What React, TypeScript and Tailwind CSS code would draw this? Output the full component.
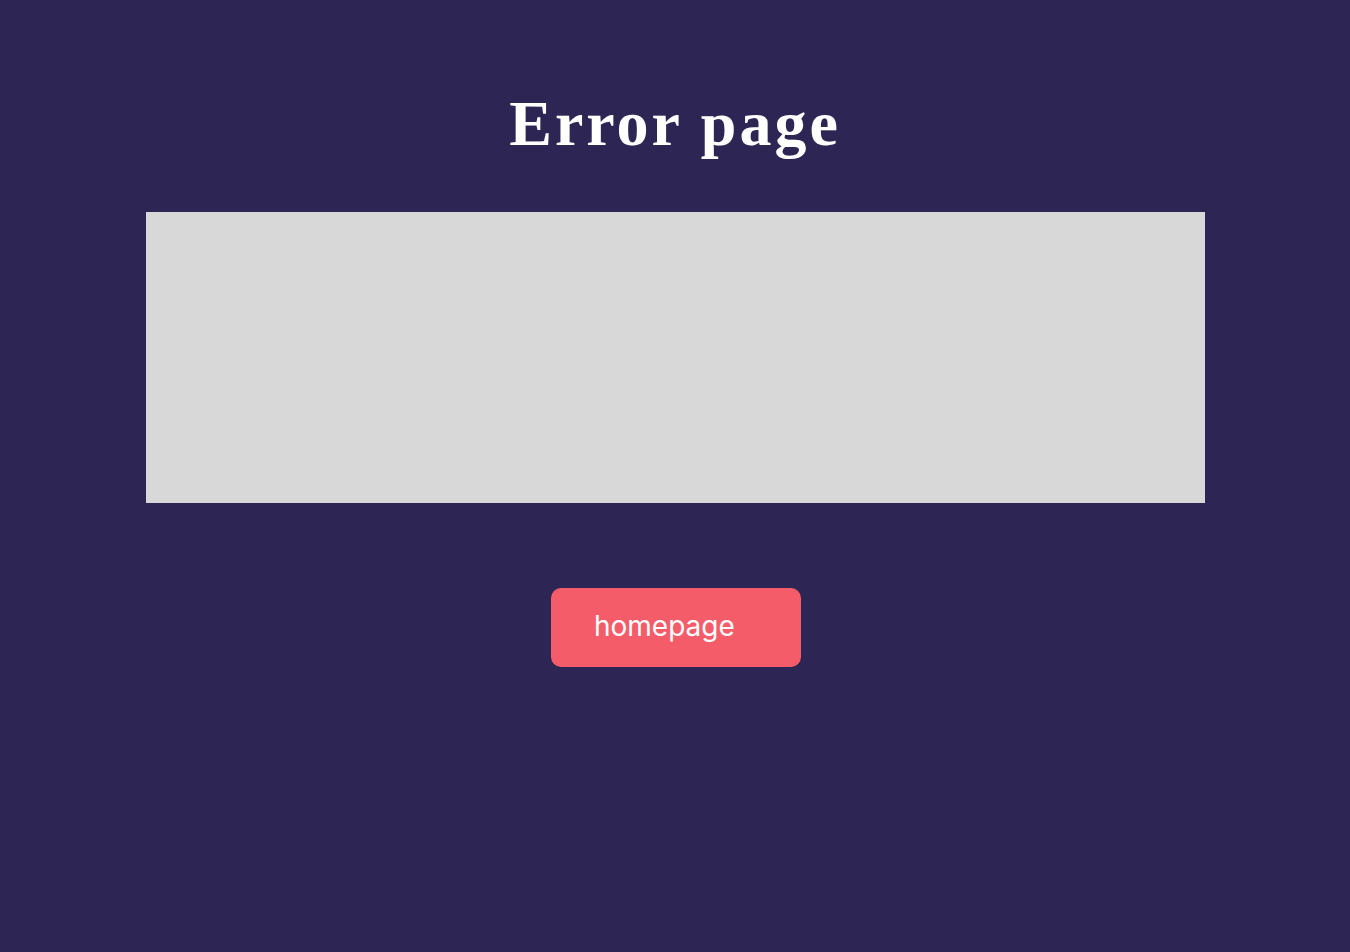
export default function App() {
  return (
    <main className="min-h-screen bg-[#2d2654] flex flex-col items-center">
      {/* Title */}
      <h1 className="mt-[84px] text-[64px] leading-[80px] text-white font-semibold font-['Liberation_Serif',serif] tracking-[3px]">
        Error page
      </h1>

      {/* Placeholder image */}
      <div className="mt-[48px] w-[1059px] h-[291px] bg-[#d8d8d8]" />

      {/* Button */}
      <button className="mt-[85px] ml-[2px] w-[250px] h-[79px] rounded-[10px] bg-[#f45c6a] text-left pl-[43px] pb-[4px] text-white text-[28px] font-['Inter',sans-serif]">
        homepage
      </button>
    </main>
  )
}
